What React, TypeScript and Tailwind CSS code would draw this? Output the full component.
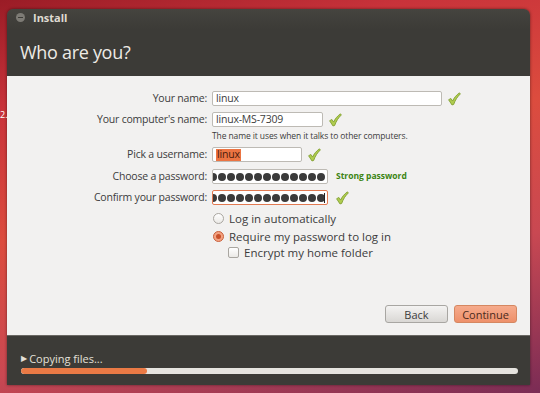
import React from "react";

const Check = () => (
  <svg width="14" height="14" viewBox="0 0 13 13" className="shrink-0">
    <path
      d="M1.5 7.2 L3.6 6 L5.2 8.4 C6.6 5.4 8.6 2.8 11.6 0.8 L12.4 1.8 C9.6 4.4 7.6 7.6 6.2 11.6 L4.6 12 Z"
      fill="#b0cc50"
      stroke="#809e30"
      strokeWidth="0.8"
      strokeLinejoin="round"
    />
  </svg>
);

const Dots = ({ n }: { n: number }) => (
  <div className="flex justify-end items-center gap-[1px] w-full overflow-hidden pr-[2px]">
    {Array.from({ length: n }).map((_, i) => (
      <span key={i} className="w-[8px] h-[8px] shrink-0 rounded-full bg-[#3a3a3a]" />
    ))}
  </div>
);

const inputBase =
  "h-[15px] bg-white border border-[#bdbab4] rounded-[2px] flex items-center px-[3px] text-[10.5px] tracking-[-0.2px] text-[#3c3c3c] leading-none";

const label = "w-[200px] text-right text-[10.5px] tracking-[-0.2px]";

export default function App() {
  return (
    <div
      className="relative w-[540px] h-[393px] overflow-hidden bg-[linear-gradient(165deg,#9a1c26_0%,#c8323a_20%,#dc4c3e_45%,#c94852_70%,#7a2c55_100%)]"
      style={{ fontFamily: "'Open Sans', 'Noto Sans', 'DejaVu Sans', sans-serif" }}
    >
      <div className="absolute left-0 top-[110px] text-[9px] text-white leading-none">2.</div>
      <div className="ml-[7px] mt-[9px] w-[523px] h-[376px] flex flex-col rounded-t-[6px] overflow-hidden shadow-[0_0_3px_rgba(0,0,0,0.5)]">
        {/* header */}
        <div className="h-[67px] bg-[linear-gradient(180deg,#45443f_0%,#3c3b37_30%,#3c3b37_100%)] flex flex-col">
          <div className="h-[17px] flex items-center pl-[9px] gap-[8px]">
            <div className="w-[9px] h-[9px] rounded-full bg-[#7d7b75] flex items-center justify-center">
              <div className="w-[5px] h-[1px] bg-[#3c3b37]" />
            </div>
            <span className="text-[11px] font-bold text-[#dfdbd2] leading-none">Install</span>
          </div>
          <div className="mt-[15px] pl-[13px] text-[18px] tracking-[-0.3px] leading-[22px] text-[#eeebe6]">Who are you?</div>
        </div>

        {/* content */}
        <div className="flex-1 bg-[#f2f1f0] flex flex-col pt-[15px] pb-[12px] pr-[13px] text-[11px] text-[#3c3c3c] leading-none">
          <div className="flex items-center">
            <div className={label}>Your name:</div>
            <div className={`${inputBase} ml-[5px] w-[230px]`}>linux</div>
            <div className="ml-[5px]"><Check /></div>
          </div>
          <div className="flex items-center mt-[6px]">
            <div className={label}>Your computer's name:</div>
            <div className={`${inputBase} ml-[5px] w-[111px]`}>linux-MS-7309</div>
            <div className="ml-[5px]"><Check /></div>
          </div>
          <div className="ml-[205px] mt-[5px] text-[8.5px] tracking-[-0.1px] text-[#3c3c3c] h-[10px]">The name it uses when it talks to other computers.</div>
          <div className="flex items-center mt-[5px]">
            <div className={label}>Pick a username:</div>
            <div className={`${inputBase} ml-[5px] w-[90px]`}>
              <span className="bg-[#ec7442] text-[#4a1c0c] px-[1px] h-[12px] flex items-center">linux</span>
            </div>
            <div className="ml-[5px]"><Check /></div>
          </div>
          <div className="flex items-center mt-[7px]">
            <div className={label}>Choose a password:</div>
            <div className={`${inputBase} ml-[5px] w-[116px] !px-0`}>
              <Dots n={14} />
            </div>
            <div className="ml-[8px] text-[8.5px] font-bold text-[#3b8412]">Strong password</div>
          </div>
          <div className="flex items-center mt-[6px]">
            <div className={label}>Confirm your password:</div>
            <div className={`${inputBase} ml-[5px] w-[116px] !px-0 !border-[#e17a52] relative`}>
              <Dots n={14} />
              <div className="absolute right-[2px] top-[2px] w-[1px] h-[10px] bg-[#222]" />
            </div>
            <div className="ml-[7px]"><Check /></div>
          </div>
          <div className="flex items-center mt-[8px] ml-[206px]">
            <div className="w-[11px] h-[11px] rounded-full border border-[#a9a6a0] bg-[linear-gradient(180deg,#ffffff,#ebe9e6)]" />
            <span className="ml-[5px] text-[11.5px]">Log in automatically</span>
          </div>
          <div className="flex items-center mt-[6px] ml-[206px]">
            <div className="w-[11px] h-[11px] rounded-full border border-[#c9603c] bg-[#f3a281] flex items-center justify-center">
              <div className="w-[5px] h-[5px] rounded-full bg-[#c8502a]" />
            </div>
            <span className="ml-[5px] text-[11.5px]">Require my password to log in</span>
          </div>
          <div className="flex items-center mt-[5px] ml-[221px]">
            <div className="w-[11px] h-[11px] rounded-[2px] border border-[#a9a6a0] bg-[linear-gradient(180deg,#ffffff,#ebe9e6)]" />
            <span className="ml-[5px] text-[11.5px]">Encrypt my home folder</span>
          </div>
          <div className="flex-1" />
          <div className="flex justify-end gap-[6px]">
            <div className="w-[63px] h-[18px] rounded-[3px] border border-[#a8a6a2] bg-[linear-gradient(180deg,#f4f3f2,#d9d7d4)] flex items-center justify-center text-[11px] text-[#3c3c3c]">Back</div>
            <div className="w-[63px] h-[18px] rounded-[3px] border border-[#d58761] bg-[linear-gradient(180deg,#f6ab8c,#ee906a)] flex items-center justify-center text-[11px] text-[#4a2a1c]">Continue</div>
          </div>
        </div>

        {/* bottom */}
        <div className="h-[50px] bg-[#3c3b37] border-t border-[#6a6863] flex flex-col pl-[14px] pr-[12px] pt-[16px]">
          <div className="flex items-center text-[11px] text-[#e4e0d8] leading-none h-[12px]">
            <span className="text-[8px] mr-[2px]">▶</span>
            <span>Copying files...</span>
          </div>
          <div className="mt-[4px] h-[6px] rounded-full bg-[#e6e4df] overflow-hidden">
            <div className="h-full w-[126px] rounded-full bg-[#ea7a45]" />
          </div>
        </div>
      </div>
    </div>
  );
}
